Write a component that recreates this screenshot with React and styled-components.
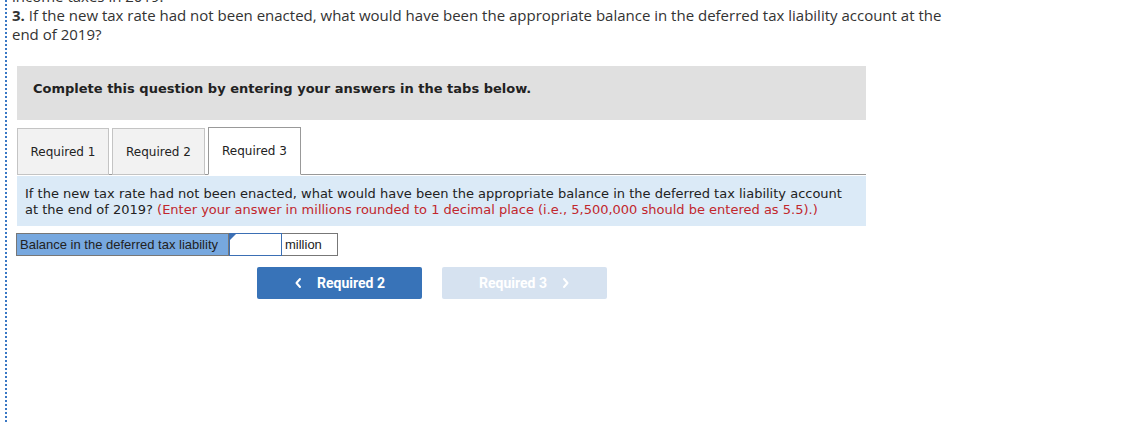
import styled, { createGlobalStyle } from 'styled-components';

const Global = createGlobalStyle`
  html, body {
    margin: 0;
    padding: 0;
    background: #fff;
    overflow: hidden;
  }
`;

const Page = styled.div`
  height: 422px;
  margin-left: 5px;
  padding-left: 5px;
  border-left: 2px dotted #3a78c4;
  overflow: hidden;
`;

const Question = styled.p`
  margin: -13px 0 0;
  font-family: 'Open Sans', 'Liberation Sans', sans-serif;
  font-size: 15px;
  line-height: 19px;
  color: #333;

  b {
    font-weight: 700;
  }
`;

const Panel = styled.div`
  margin: 22px 0 0 5px;
  width: 849px;
`;

const Notice = styled.div`
  background: #e0e0e0;
  padding: 14px 16px 22px;
  font-family: 'DejaVu Sans', Verdana, sans-serif;
  font-weight: 700;
  font-size: 13px;
  line-height: 18px;
  color: #222;
`;

const TabList = styled.div`
  display: flex;
  gap: 3px;
  margin-top: 7px;
  border-bottom: 1px solid #999;
`;

const Tab = styled.div`
  width: ${(p) => p.$w}px;
  margin-bottom: -1px;
  box-sizing: border-box;
  display: flex;
  align-items: center;
  justify-content: center;
  font-family: 'DejaVu Sans', Verdana, sans-serif;
  font-size: 12px;
  color: #222;
  background: ${(p) => (p.$active ? '#fff' : '#f2f2f2')};
  border: 1px solid ${(p) => (p.$active ? '#999' : '#c4c4c4')};
  border-bottom-color: ${(p) => (p.$active ? '#fff' : '#c4c4c4')};
  height: ${(p) => (p.$active ? '48px' : '47px')};
  align-self: flex-end;
`;

const Info = styled.div`
  margin-top: 1px;
  background: #dbeaf7;
  padding: 10px 8px 8px;
  font-family: 'DejaVu Sans', Verdana, sans-serif;
  font-size: 13px;
  line-height: 16px;
  color: #222;

  span {
    color: #c1272d;
  }
`;

const Row = styled.div`
  display: flex;
  margin: 7px 0 0 -1px;
  height: 23px;
  font-family: 'Liberation Sans', Arial, sans-serif;
  font-size: 13px;
  color: #222;
`;

const Label = styled.div`
  width: 213px;
  box-sizing: border-box;
  background: #77a8df;
  border: 1px solid #777;
  padding: 0 3px;
  display: flex;
  align-items: center;
`;

const InputBox = styled.div`
  position: relative;
  width: 53px;
  box-sizing: border-box;
  background: #fff;
  border: 1px solid #3b6fb4;

  &::before {
    content: '';
    position: absolute;
    left: 0;
    top: 0;
    border-top: 6px solid #3b6fb4;
    border-right: 6px solid transparent;
  }
`;

const Unit = styled.div`
  width: 56px;
  box-sizing: border-box;
  background: #fff;
  border: 1px solid #777;
  border-left: 0;
  padding: 0 3px;
  display: flex;
  align-items: center;
`;

const Nav = styled.div`
  display: flex;
  gap: 20px;
  margin: 11px 0 0 240px;
`;

const NavButton = styled.div`
  width: 165px;
  height: 32px;
  border-radius: 2px;
  display: flex;
  align-items: center;
  justify-content: center;
  gap: 14px;
  font-family: Roboto, 'Liberation Sans', sans-serif;
  font-weight: 700;
  font-size: 14px;
  color: #fff;
  background: ${(p) => (p.$disabled ? '#d6e2f0' : '#3873b8')};

  svg {
    width: 9px;
    height: 12px;
  }
`;

const Chevron = ({ dir }) => (
  <svg viewBox="0 0 9 12" fill="none" stroke="#fff" strokeWidth="2" strokeLinecap="round" strokeLinejoin="round">
    {dir === 'left' ? <polyline points="6,2 2.5,6 6,10" /> : <polyline points="3,2 6.5,6 3,10" />}
  </svg>
);

export default function App() {
  return (
    <>
      <Global />
      <Page>
        <Question>
          income taxes in 2019.
          <br />
          <b>3.</b> If the new tax rate had not been enacted, what would have been the appropriate balance in the deferred tax liability account at the
          <br />
          end of 2019?
        </Question>

        <Panel>
          <Notice>Complete this question by entering your answers in the tabs below.</Notice>

          <TabList>
            <Tab $w={92}>Required 1</Tab>
            <Tab $w={93}>Required 2</Tab>
            <Tab $w={93} $active>Required 3</Tab>
          </TabList>

          <Info>
            If the new tax rate had not been enacted, what would have been the appropriate balance in the deferred tax liability account
            <br />
            at the end of 2019? <span>(Enter your answer in millions rounded to 1 decimal place (i.e., 5,500,000 should be entered as 5.5).)</span>
          </Info>

          <Row>
            <Label>Balance in the deferred tax liability</Label>
            <InputBox />
            <Unit>million</Unit>
          </Row>

          <Nav>
            <NavButton>
              <Chevron dir="left" />
              Required 2
            </NavButton>
            <NavButton $disabled>
              Required 3
              <Chevron dir="right" />
            </NavButton>
          </Nav>
        </Panel>
      </Page>
    </>
  );
}
